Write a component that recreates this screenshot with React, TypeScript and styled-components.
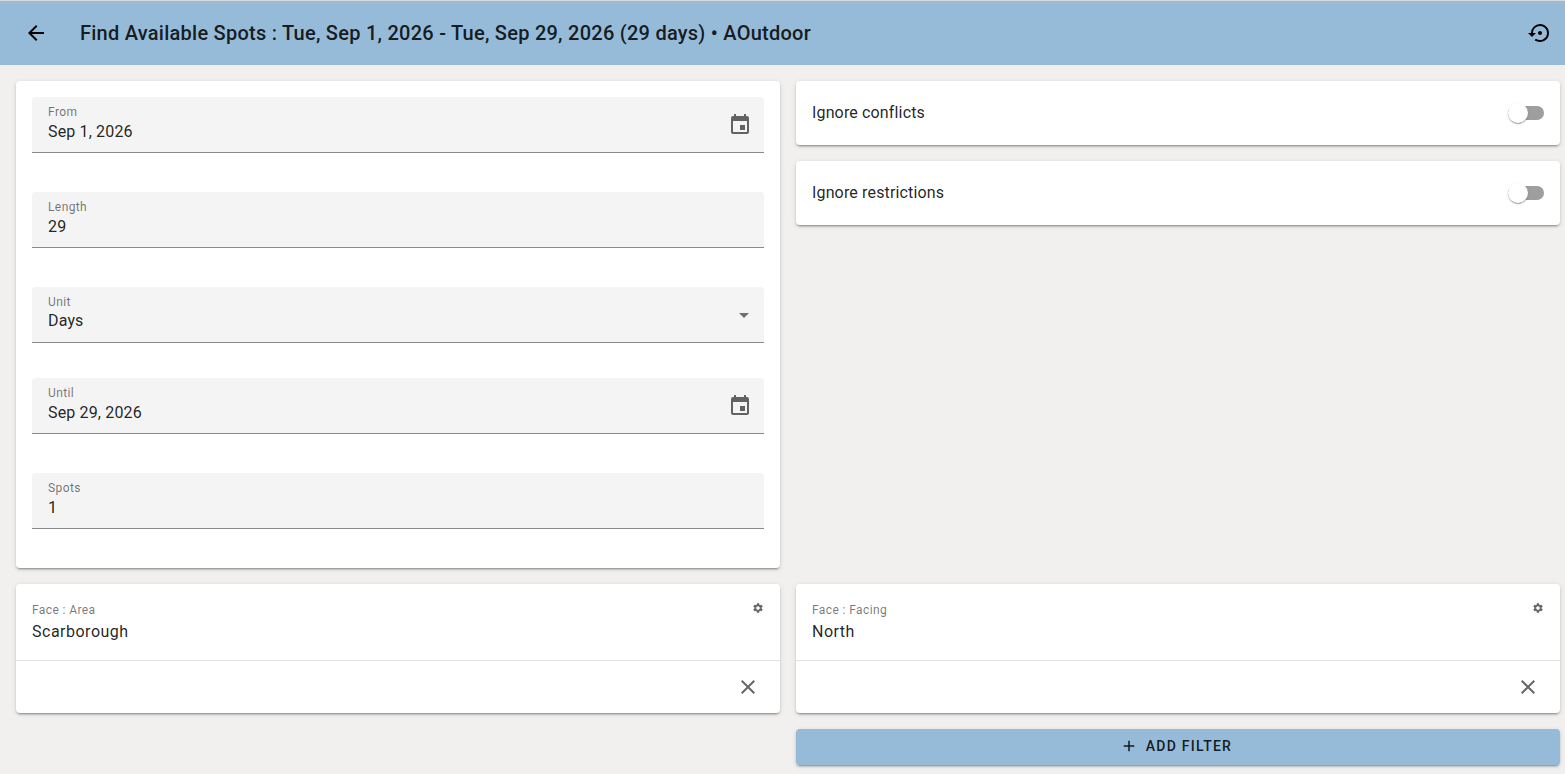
import * as React from 'react';
import styled, { createGlobalStyle } from 'styled-components';
import { MdAdd, MdArrowBack, MdClose, MdEvent, MdSettings, MdSettingsBackupRestore } from 'react-icons/md';

const INK = 'rgba(0, 0, 0, 0.87)';
const MUTED = 'rgba(0, 0, 0, 0.54)';
const ELEVATION =
  '0 3px 1px -2px rgba(0,0,0,.2), 0 2px 2px 0 rgba(0,0,0,.14), 0 1px 5px 0 rgba(0,0,0,.12)';

export default function App() {
  return (
    <>
      <GlobalStyle />
      <TopBar>
        <BarIcon>
          <MdArrowBack size={24} />
        </BarIcon>
        <Title>Find Available Spots : Tue, Sep 1, 2026 - Tue, Sep 29, 2026 (29 days) • AOutdoor</Title>
        <BarIcon>
          <MdSettingsBackupRestore size={24} />
        </BarIcon>
      </TopBar>

      <Content>
        <FormCard>
          <Field label="From" value="Sep 1, 2026" icon="date" />
          <Field label="Length" value="29" />
          <Field label="Unit" value="Days" icon="select" tight />
          <Field label="Until" value="Sep 29, 2026" icon="date" />
          <Field label="Spots" value="1" />
        </FormCard>

        <ToggleColumn>
          <ToggleCard>
            <ToggleLabel>Ignore conflicts</ToggleLabel>
            <Toggle />
          </ToggleCard>
          <ToggleCard>
            <ToggleLabel>Ignore restrictions</ToggleLabel>
            <Toggle />
          </ToggleCard>
        </ToggleColumn>

        <FilterCard label="Face : Area" value="Scarborough" />
        <FilterCard label="Face : Facing" value="North" />

        <span />
        <AddButton>
          <MdAdd size={18} />
          ADD FILTER
        </AddButton>
      </Content>
    </>
  );
}

function Field(props: { label: string; value: string; icon?: 'date' | 'select'; tight?: boolean }) {
  return (
    <FieldBox $tight={props.tight}>
      <FieldText>
        <FieldLabel>{props.label}</FieldLabel>
        <FieldValue $tight={props.tight}>{props.value}</FieldValue>
      </FieldText>
      {props.icon === 'date' && (
        <DateIcon>
          <MdEvent size={24} />
        </DateIcon>
      )}
      {props.icon === 'select' && <SelectArrow />}
    </FieldBox>
  );
}

function Toggle() {
  return (
    <Track>
      <Thumb />
    </Track>
  );
}

function FilterCard(props: { label: string; value: string }) {
  return (
    <FilterBox>
      <FilterTop>
        <FilterText>
          <FilterLabel>{props.label}</FilterLabel>
          <FilterValue>{props.value}</FilterValue>
        </FilterText>
        <GearIcon>
          <MdSettings size={12} />
        </GearIcon>
      </FilterTop>
      <FilterActions>
        <MdClose size={24} />
      </FilterActions>
    </FilterBox>
  );
}

const GlobalStyle = createGlobalStyle`
  html, body {
    margin: 0;
    height: 100%;
    background: #f1f0ef;
    color: ${INK};
    font-family: Roboto, "Liberation Sans", sans-serif;
    overflow: hidden;
  }
`;

const TopBar = styled.header`
  display: flex;
  align-items: center;
  height: 64px;
  margin-top: 1px;
  padding: 0 13px 0 24px;
  background: #95bbd9;
  box-shadow: 0 -1px 0 #d9d9d9;
`;

const BarIcon = styled.span`
  display: flex;
  color: #000;
`;

const Title = styled.h1`
  flex: 1;
  margin: 0 0 0 32px;
  font-size: 20px;
  font-weight: 500;
  letter-spacing: 0.25px;
  color: ${INK};
`;

const Content = styled.main`
  display: grid;
  grid-template-columns: 764px 764px;
  grid-template-rows: 487px 129px 36px;
  gap: 16px;
  padding: 16px 0 0 16px;
`;

const Card = styled.section`
  background: #fff;
  border-radius: 4px;
  box-shadow: ${ELEVATION};
`;

const FormCard = styled(Card)`
  padding: 16px 16px 0;
`;

const FieldBox = styled.div<{ $tight?: boolean }>`
  display: flex;
  align-items: center;
  height: 55px;
  margin-bottom: ${p => (p.$tight ? 35 : 39)}px;
  padding: 0 12px 0 16px;
  background: #f4f4f4;
  border-radius: 4px 4px 0 0;
  border-bottom: 1px solid #8a8a8a;
`;

const FieldText = styled.div`
  flex: 1;
  align-self: flex-start;
  padding-top: 7px;
`;

const FieldLabel = styled.div`
  font-size: 12px;
  line-height: 16px;
  letter-spacing: 0.4px;
  color: ${MUTED};
`;

const FieldValue = styled.div<{ $tight?: boolean }>`
  margin-top: ${p => (p.$tight ? 0 : 1)}px;
  font-size: 16px;
  line-height: 22px;
  letter-spacing: 0.15px;
  color: ${INK};
`;

const DateIcon = styled.span`
  display: flex;
  color: rgba(0, 0, 0, 0.6);
`;

const SelectArrow = styled.span`
  width: 0;
  height: 0;
  margin: 2px 3px 0 0;
  border-left: 5px solid transparent;
  border-right: 5px solid transparent;
  border-top: 5px solid #6e6e6e;
`;

const ToggleColumn = styled.div`
  display: flex;
  flex-direction: column;
  gap: 16px;
`;

const ToggleCard = styled(Card)`
  display: flex;
  align-items: center;
  justify-content: space-between;
  height: 64px;
  padding: 0 16px;
`;

const ToggleLabel = styled.span`
  margin-top: -2px;
  font-size: 16px;
  letter-spacing: 0.15px;
`;

const Track = styled.span`
  position: relative;
  width: 36px;
  height: 14px;
  border-radius: 7px;
  background: #9e9e9e;
`;

const Thumb = styled.span`
  position: absolute;
  top: -3px;
  left: 0;
  width: 20px;
  height: 20px;
  border-radius: 50%;
  background: #fff;
  box-shadow: 0 2px 1px -1px rgba(0,0,0,.2), 0 1px 1px 0 rgba(0,0,0,.14), 0 1px 3px 0 rgba(0,0,0,.12);
`;

const FilterBox = styled(Card)`
  display: flex;
  flex-direction: column;
`;

const FilterTop = styled.div`
  display: flex;
  justify-content: space-between;
  height: 76px;
  padding: 0 16px;
  border-bottom: 1px solid #e0e0e0;
`;

const FilterText = styled.div`
  padding-top: 18px;
`;

const FilterLabel = styled.div`
  font-size: 12px;
  line-height: 16px;
  letter-spacing: 0.4px;
  color: ${MUTED};
`;

const FilterValue = styled.div`
  margin-top: 3px;
  font-size: 16px;
  line-height: 22px;
  letter-spacing: 0.5px;
`;

const GearIcon = styled.span`
  display: flex;
  height: 12px;
  margin: 18px 0 0;
  color: rgba(0, 0, 0, 0.6);
`;

const FilterActions = styled.div`
  flex: 1;
  display: flex;
  align-items: center;
  justify-content: flex-end;
  padding-right: 20px;
  color: rgba(0, 0, 0, 0.6);
`;

const AddButton = styled.button`
  display: flex;
  align-items: center;
  justify-content: center;
  gap: 8px;
  padding: 0 4px 2px 0;
  border: 0;
  border-radius: 4px;
  background: #95bbd9;
  color: ${INK};
  font-family: inherit;
  font-size: 14px;
  font-weight: 500;
  letter-spacing: 1.25px;
  box-shadow: ${ELEVATION};
`;
